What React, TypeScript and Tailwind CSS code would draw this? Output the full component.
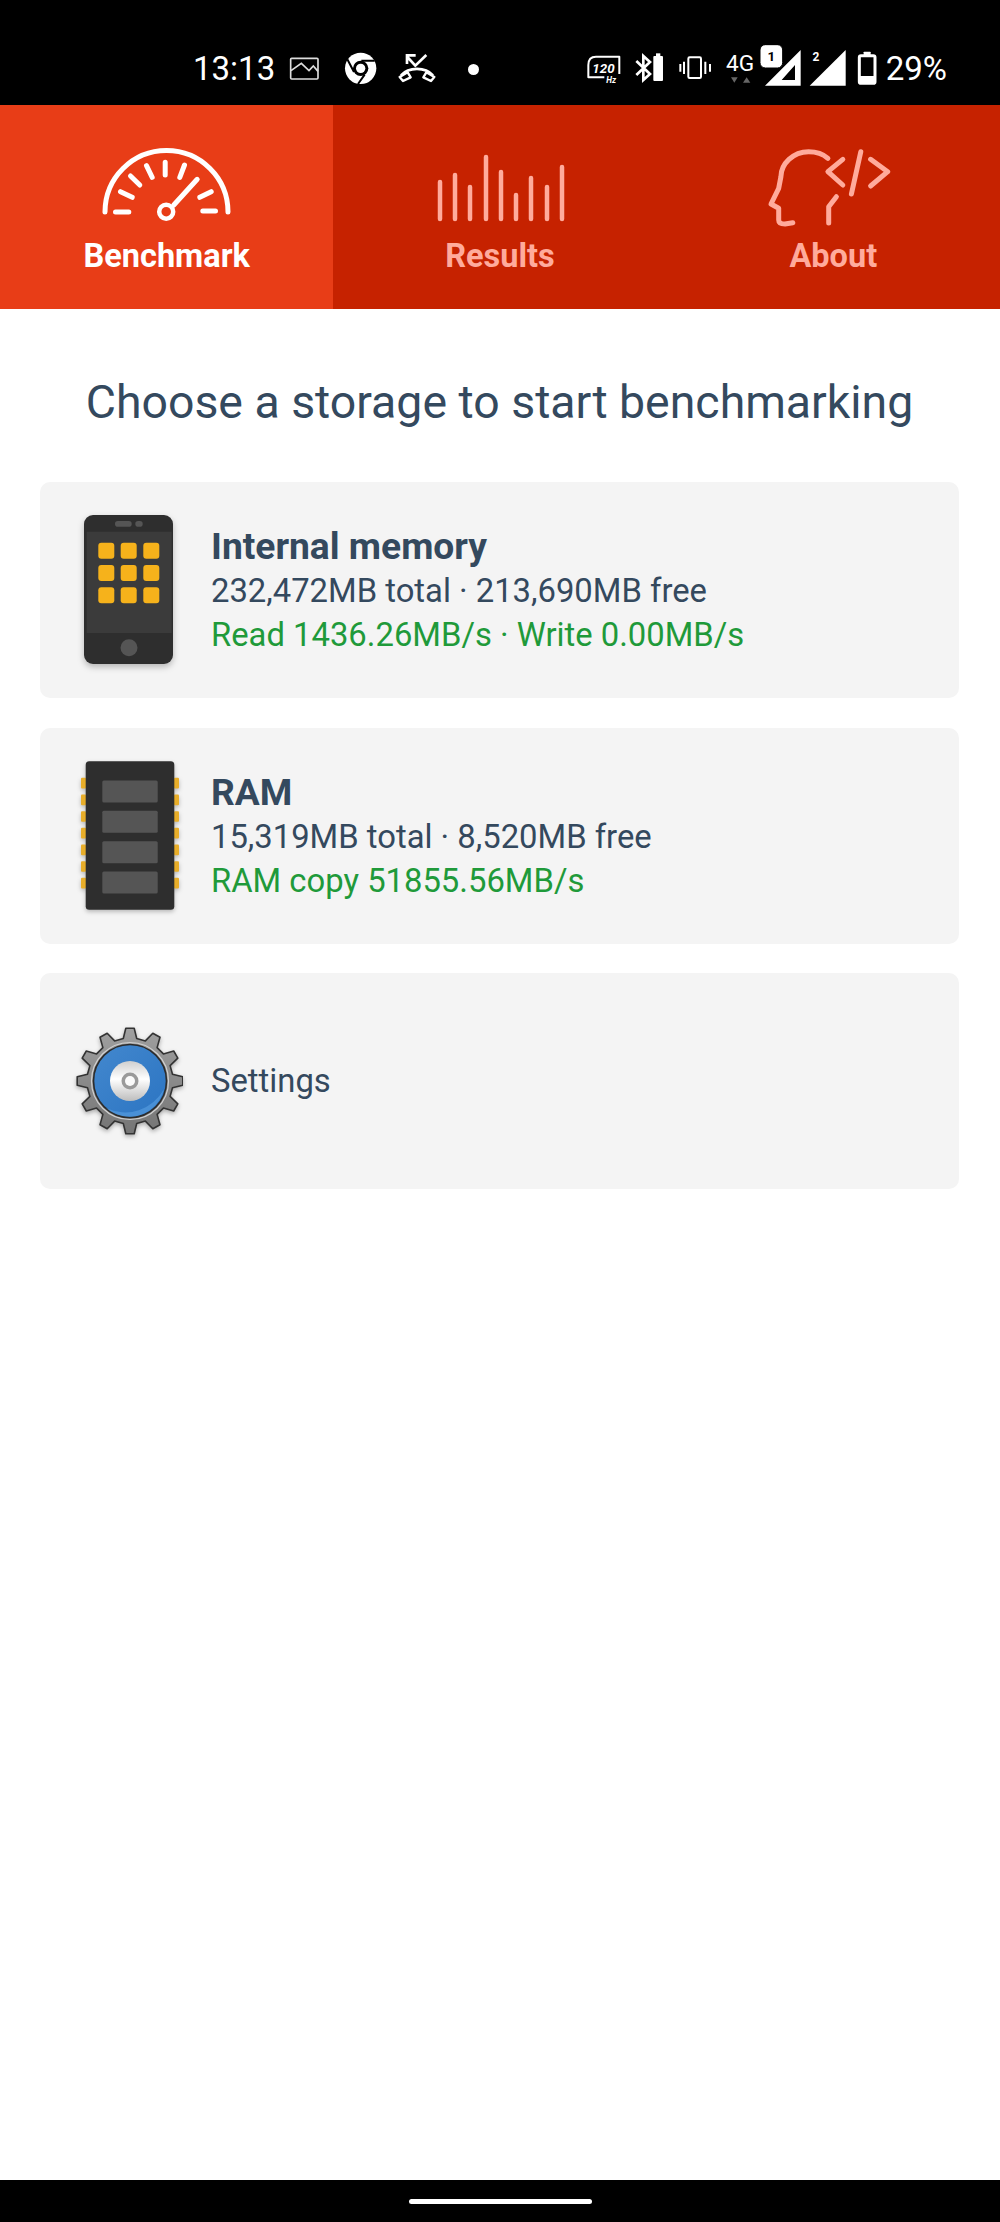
import React from "react";

// 12 tooth gear outline, centre 54,54
function gearPath() {
  const teeth = 12;
  const tip = 53;
  const root = 43;
  const step = (Math.PI * 2) / teeth;
  let d = "";
  for (let i = 0; i < teeth; i++) {
    const a = i * step - Math.PI / 2;
    const pts: [number, number][] = [
      [root, a - step * 0.3],
      [tip, a - step * 0.15],
      [tip, a + step * 0.15],
      [root, a + step * 0.3],
    ];
    pts.forEach(([r, t], j) => {
      const x = (54 + r * Math.cos(t)).toFixed(1);
      const y = (54 + r * Math.sin(t)).toFixed(1);
      d += `${i === 0 && j === 0 ? "M" : "L"}${x} ${y} `;
    });
  }
  return d + "Z";
}

function StatusIcon({ x, w, className, children }: { x: number; w: number; className?: string; children: React.ReactNode }) {
  return (
    <svg viewBox={`${x} 135 ${w} 150`} width={w / 3} height={50} className={className}>
      {children}
    </svg>
  );
}

function StatusBar() {
  return (
    <div className="h-[105px] bg-black flex items-center pt-[35px] pl-[193px] pr-[53px] text-white shrink-0">
      <span className="text-[33px] leading-none mt-[-3px]">13:13</span>
      <StatusIcon x={415} w={92} className="ml-[14px]">
        <rect x="420" y="175" width="82" height="62" rx="3" fill="none" stroke="#ddd" strokeWidth="5" />
        <path d="M421 212 L452 190 L475 212 L488 198 L502 214" fill="none" stroke="#ddd" strokeWidth="5" />
      </StatusIcon>
      <StatusIcon x={580} w={100} className="ml-[24px]">
        <circle cx="630" cy="205" r="47" fill="#fff" />
        <circle cx="630" cy="205" r="23" fill="#000" />
        <circle cx="630" cy="205" r="14" fill="#fff" />
        <path d="M632 182 L672 182 M610 216 L590 178 M642 224 L622 252" stroke="#000" strokeWidth="6" />
      </StatusIcon>
      <StatusIcon x={740} w={125} className="ml-[20px]">
        <path d="M752 226 C775 200 825 200 848 226" fill="none" stroke="#fff" strokeWidth="8" />
        <path d="M748 231 L772 217 L781 232 L758 243 Z M852 231 L828 217 L819 232 L842 243 Z" fill="none" stroke="#fff" strokeWidth="7" strokeLinejoin="round" />
        <path d="M828 165 L795 197 L771 171 M770 192 V166 H796" fill="none" stroke="#fff" strokeWidth="8" />
      </StatusIcon>
      <div className="ml-[29px] w-[11px] h-[11px] rounded-full bg-white mt-[-2px]" />
      <div className="ml-auto flex items-center">
        <StatusIcon x={45} w={110}>
          <path d="M75 170 L145 170 L145 222 M52 195 L52 232 L100 232" fill="none" stroke="#fff" strokeWidth="6" strokeLinejoin="round" />
          <path d="M52 195 Q52 170 75 170" fill="none" stroke="#fff" strokeWidth="6" />
          <text x="64" y="218" fontSize="40" fontStyle="italic" fontWeight="700" fill="#fff" fontFamily="Roboto, sans-serif">120</text>
          <text x="106" y="250" fontSize="25" fontStyle="italic" fontWeight="700" fill="#fff" fontFamily="Roboto, sans-serif">Hz</text>
        </StatusIcon>
        <StatusIcon x={190} w={92} className="ml-[11px]">
          <path d="M197 183 L238 222 L218 240 L218 168 L238 186 L197 225" fill="none" stroke="#fff" strokeWidth="8" />
          <rect x="248" y="168" width="29" height="75" rx="3" fill="#fff" />
          <rect x="256" y="160" width="13" height="10" fill="#fff" />
        </StatusIcon>
        <StatusIcon x={318} w={104} className="ml-[14px]">
          <rect x="349" y="172" width="38" height="62" rx="4" fill="none" stroke="#fff" strokeWidth="6" />
          <path d="M336 185 V222 M400 185 V222" stroke="#fff" strokeWidth="6" />
          <path d="M325 192 V215 M414 192 V215" stroke="#fff" strokeWidth="6" />
        </StatusIcon>
        <StatusIcon x={462} w={92} className="ml-[12px]">
          <text x="465" y="212" fontSize="68" fill="#fff" fontFamily="Roboto, sans-serif">4G</text>
          <path d="M480 232 H500 L490 248 Z" fill="#666" />
          <path d="M516 248 H538 L527 232 Z" fill="#666" />
        </StatusIcon>
        <StatusIcon x={575} w={126} className="ml-[4px]">
          <path fillRule="evenodd" d="M590 257 L697 150 V257 Z M640 240 H680 V195 Z" fill="#fff" />
          <rect x="575" y="134" width="68" height="70" rx="16" fill="#fff" stroke="#000" strokeWidth="3" />
          <text x="609" y="184" fontSize="40" fontWeight="700" textAnchor="middle" fill="#000" fontFamily="Roboto, sans-serif">1</text>
        </StatusIcon>
        <StatusIcon x={718} w={112} className="ml-[7px]">
          <path d="M720 257 L828 150 V257 Z" fill="#fff" />
          <text x="739" y="184" fontSize="36" fontWeight="700" textAnchor="middle" fill="#fff" fontFamily="Roboto, sans-serif">2</text>
        </StatusIcon>
        <StatusIcon x={860} w={62} className="ml-[11px]">
          <rect x="867" y="167" width="47" height="83" rx="5" fill="none" stroke="#fff" strokeWidth="9" />
          <rect x="867" y="228" width="47" height="24" rx="4" fill="#fff" />
          <rect x="880" y="155" width="21" height="12" rx="2" fill="#fff" />
        </StatusIcon>
        <span className="text-[33px] leading-none ml-[8px] mt-[-3px]">29%</span>
      </div>
    </div>
  );
}

function GaugeIcon() {
  return (
    <svg viewBox="0 0 140 90" width={140} height={90} fill="none" stroke="currentColor" strokeLinecap="round">
      <path d="M8 72 A 61.5 61.5 0 0 1 131 72" strokeWidth="5" />
      <path d="M18.5 72 H31.8 M105.8 71 H118.5 M23.5 51.7 L35.2 57.3 M33.5 36 L42.8 45 M49.5 25.7 L55.2 37.3 M68.2 22.3 V35 M87.5 25 L82.8 37.3 M114.2 51.7 L102.8 57.3" strokeWidth="5" />
      <path d="M76.8 65 L100.2 39.3" strokeWidth="5" />
      <circle cx="69.2" cy="71.7" r="7" strokeWidth="4.5" />
    </svg>
  );
}

function ResultsIcon() {
  const bars: [number, number][] = [
    [10, 42], [25, 35], [40, 47], [56, 17], [71, 32], [86, 55], [101, 38], [117, 47], [132, 27],
  ];
  return (
    <svg viewBox="0 0 140 90" width={140} height={90} fill="none" stroke="currentColor" strokeLinecap="round" strokeWidth="4.5">
      {bars.map(([x, y]) => (
        <path key={x} d={`M${x} ${y} V79`} />
      ))}
    </svg>
  );
}

function AboutIcon() {
  return (
    <svg viewBox="0 0 147 90" width={147} height={90} fill="none" stroke="currentColor" strokeLinecap="round" strokeLinejoin="round" strokeWidth="5">
      <path d="M67.9 18.3 C62 13 55 11.7 48.6 11.7 C33 11.7 21 24 20.9 36.7 L18.7 48.3 L11 64 L18.7 68.3 V80 Q18.7 84 25 84 L32.8 82.7" />
      <path d="M76.4 56.7 L68.7 66.7 V83" />
      <path d="M82.8 19.3 L67.9 31.7 L82.8 45" />
      <path d="M100.8 11.7 L91.4 54" />
      <path d="M110.6 19.3 L127.7 31.7 L110.6 46" />
    </svg>
  );
}

function Tab({ label, active, children }: { label: string; active?: boolean; children: React.ReactNode }) {
  return (
    <div className={`flex-1 flex flex-col items-center pt-[35px] ${active ? "bg-[#e83d17] text-white" : "text-[#ffab9c]"}`}>
      {children}
      <span className="text-[32.5px] leading-[40px] font-bold mt-[6px]">{label}</span>
    </div>
  );
}

function PhoneIcon() {
  const xs = [23.3, 45.7, 68.3];
  const ys = [32.7, 55, 77.3];
  return (
    <svg viewBox="0 0 108 160" width={108} height={160} className="drop-shadow-[0_3px_3px_rgba(0,0,0,0.25)]">
      <rect x="9" y="5" width="89" height="149" rx="9" fill="#2e2e2e" />
      <rect x="11.7" y="21.7" width="85" height="101.3" fill="#3b3b3b" />
      <rect x="40" y="11" width="16.7" height="5.7" rx="2.8" fill="#555" />
      <rect x="60.3" y="11" width="7.4" height="5.7" rx="2.8" fill="#555" />
      <circle cx="54" cy="137.7" r="8.5" fill="#555" />
      {ys.map((y) =>
        xs.map((x) => <rect key={`${x}-${y}`} x={x} y={y} width="16" height="16" rx="3" fill="#f6b21b" />)
      )}
    </svg>
  );
}

function RamIcon() {
  const pins = [0, 1, 2, 3, 4, 5, 6];
  const chips = [25.5, 55.8, 86.2, 116.5];
  return (
    <svg viewBox="0 1 108 160" width={108} height={160} className="drop-shadow-[0_2px_2px_rgba(0,0,0,0.25)]">
      {pins.map((i) => (
        <g key={i} fill="#e8ae2a">
          <rect x="6" y={22.8 + i * 16.67} width="5" height="10.7" rx="1" />
          <rect x="99" y={22.8 + i * 16.67} width="5" height="10.7" rx="1" />
        </g>
      ))}
      <rect x="10.7" y="6.2" width="88.6" height="148.6" rx="3.5" fill="#2e2e2e" />
      {chips.map((y) => (
        <rect key={y} x="27.3" y={y} width="55.4" height="22" rx="1.5" fill="#555" />
      ))}
    </svg>
  );
}

function GearIcon() {
  return (
    <svg viewBox="-1 0 108 108" width={108} height={108} className="drop-shadow-[0_2px_2px_rgba(0,0,0,0.3)]">
      <defs>
        <linearGradient id="gearBody" x1="0" y1="0" x2="0" y2="1">
          <stop offset="0" stopColor="#a0a0a0" />
          <stop offset="1" stopColor="#747474" />
        </linearGradient>
        <linearGradient id="gearDisc" x1="0" y1="0" x2="1" y2="1">
          <stop offset="0" stopColor="#4388ce" />
          <stop offset="1" stopColor="#2b74c2" />
        </linearGradient>
        <linearGradient id="gearCd" x1="0" y1="0" x2="0" y2="1">
          <stop offset="0" stopColor="#cfcfcf" />
          <stop offset="0.45" stopColor="#ffffff" />
          <stop offset="1" stopColor="#bdbdbd" />
        </linearGradient>
      </defs>
      <path d={gearPath()} fill="url(#gearBody)" stroke="#333" strokeWidth="1.6" strokeLinejoin="round" />
      <circle cx="54" cy="54" r="38.5" fill="none" stroke="#d0d0d0" strokeWidth="1.2" />
      <circle cx="54" cy="54" r="36.5" fill="url(#gearDisc)" stroke="#2c2c2c" strokeWidth="1.6" />
      <path d="M30 81 A 35.5 35.5 0 0 0 88 62 A 44 44 0 0 1 30 81 Z" fill="#5aa0e2" opacity="0.6" />
      <circle cx="54" cy="54" r="20" fill="url(#gearCd)" />
      <circle cx="54" cy="54" r="8.5" fill="#9a9a9a" />
      <circle cx="54" cy="54" r="5" fill="#fafafa" />
    </svg>
  );
}

function StorageCard({ icon, children }: { icon: React.ReactNode; children: React.ReactNode }) {
  return (
    <div className="h-[216px] rounded-[10px] bg-[#f4f4f4] flex items-center pl-[35px] gap-[28px]">
      <div className="w-[108px] shrink-0 flex justify-center">{icon}</div>
      <div className="flex flex-col">{children}</div>
    </div>
  );
}

function Heading({ children }: { children: React.ReactNode }) {
  return <div className="text-[37.2px] leading-[46px] font-bold text-[#34495e]">{children}</div>;
}

function Line({ green, children }: { green?: boolean; children: React.ReactNode }) {
  return <div className={`text-[32.8px] leading-[44px] ${green ? "text-[#1f9a3a]" : "text-[#34495e]"}`}>{children}</div>;
}

export default function App() {
  return (
    <div className="h-[2222px] flex flex-col bg-white font-['Roboto',sans-serif]">
      <StatusBar />
      <div className="h-[204px] flex bg-[#c62200] shrink-0">
        <Tab label="Benchmark" active>
          <GaugeIcon />
        </Tab>
        <Tab label="Results">
          <ResultsIcon />
        </Tab>
        <Tab label="About">
          <AboutIcon />
        </Tab>
      </div>
      <main className="flex-1 pl-[40px] pr-[41px]">
        <h1 className="mt-[63px] mb-[50px] text-center text-[46.4px] leading-[60px] text-[#34495e]">
          Choose a storage to start benchmarking
        </h1>
        <div className="flex flex-col gap-[29.5px]">
          <StorageCard icon={<PhoneIcon />}>
            <Heading>Internal memory</Heading>
            <Line>232,472MB total · 213,690MB free</Line>
            <Line green>Read 1436.26MB/s · Write 0.00MB/s</Line>
          </StorageCard>
          <StorageCard icon={<RamIcon />}>
            <Heading>RAM</Heading>
            <Line>15,319MB total · 8,520MB free</Line>
            <Line green>RAM copy 51855.56MB/s</Line>
          </StorageCard>
          <StorageCard icon={<GearIcon />}>
            <Line>Settings</Line>
          </StorageCard>
        </div>
      </main>
      <div className="h-[42px] bg-black flex items-center justify-center shrink-0">
        <div className="w-[183px] h-[5px] rounded-full bg-white" />
      </div>
    </div>
  );
}
